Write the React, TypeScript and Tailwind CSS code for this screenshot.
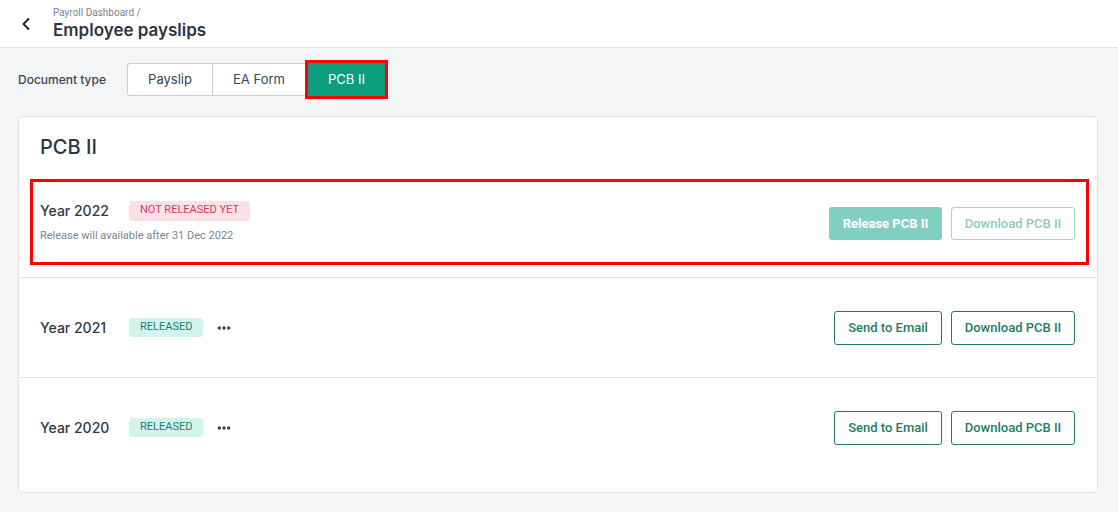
import { ChevronLeft, MoreHorizontal } from "lucide-react";

type Row = {
  year: string;
  released: boolean;
  note?: string;
};

const rows: Row[] = [
  { year: "Year 2022", released: false, note: "Release will available after 31 Dec 2022" },
  { year: "Year 2021", released: true },
  { year: "Year 2020", released: true },
];

const inter = { fontFamily: "Inter, 'Noto Sans', sans-serif" };

function RowContent({ row }: { row: Row }) {
  return (
    <div className="flex w-full items-center justify-between">
      <div className="flex flex-col">
        <div className="flex items-center">
          <span
            className="w-[89px] text-[14px] font-medium text-[#2f3847]"
            style={inter}
          >
            {row.year}
          </span>
          {row.released ? (
            <span className="flex h-[19px] items-center rounded-[3px] bg-[#d3f4ec] px-[11px] text-[11px] text-[#17806a]">
              RELEASED
            </span>
          ) : (
            <span className="flex h-[20px] items-center rounded-[3px] bg-[#fde1e7] px-[11px] text-[11px] text-[#d23c5c]">
              NOT RELEASED YET
            </span>
          )}
          {row.released && (
            <MoreHorizontal className="ml-[13px] h-[16px] w-[16px] text-[#2f3847]" strokeWidth={3} />
          )}
        </div>
        {row.note && (
          <span className="mt-[7px] text-[11px] leading-[16px] text-[#7b838f]">{row.note}</span>
        )}
      </div>
      <div className="flex items-center gap-[9px]">
        {row.released ? (
          <>
            <button className="h-[34px] w-[108px] rounded-[3px] border border-[#1f7c69] bg-white text-[13px] font-medium text-[#1f7c69]">
              Send to Email
            </button>
            <button className="h-[34px] w-[124px] rounded-[3px] border border-[#1f7c69] bg-white text-[13px] font-medium text-[#1f7c69]">
              Download PCB II
            </button>
          </>
        ) : (
          <>
            <button className="mt-[3px] h-[33px] w-[113px] rounded-[3px] bg-[#80cfc0] text-[13px] font-bold text-white">
              Release PCB II
            </button>
            <button className="mt-[3px] h-[33px] w-[124px] rounded-[3px] border border-[#9ed7cc] bg-white text-[13px] font-medium text-[#8fcabe]">
              Download PCB II
            </button>
          </>
        )}
      </div>
    </div>
  );
}

export default function App() {
  return (
    <div
      className="min-h-[512px] bg-[#f4f5f7] text-[#2f3847]"
      style={{ fontFamily: "Roboto, 'Liberation Sans', sans-serif" }}
    >
      <header className="flex h-[48px] items-center border-b border-[#e3e5e8] bg-white pl-[16px]">
        <ChevronLeft className="h-[20px] w-[20px] text-[#1f2530]" strokeWidth={2.4} />
        <div className="ml-[17px] flex flex-col">
          <span className="text-[10px] leading-[12px] text-[#7b838f]">Payroll Dashboard /</span>
          <span
            className="text-[17px] font-semibold leading-[22px] text-[#2c3545]"
            style={inter}
          >
            Employee payslips
          </span>
        </div>
      </header>

      <div className="pl-[18px] pr-[20px] pt-[15px] pb-[19px]">
        <div className="flex items-center">
          <span className="w-[109px] text-[12px] font-medium text-[#3a4352]" style={inter}>
            Document type
          </span>
          <div className="flex h-[33px]">
            <button
              className="w-[86px] rounded-l-[3px] border border-[#c9ccd1] bg-white text-[13px] text-[#3a4352]"
              style={inter}
            >
              Payslip
            </button>
            <button
              className="w-[93px] border-y border-r border-[#c9ccd1] bg-white text-[13px] text-[#3a4352]"
              style={inter}
            >
              EA Form
            </button>
            <button
              className="relative w-[81px] bg-[#0a9e7e] text-[13px] text-white"
              style={inter}
            >
              PCB II
              <span className="absolute -inset-y-[3px] -left-px -right-px border-[3px] border-[#ff0000]" />
            </button>
          </div>
        </div>

        <div className="mt-[20px] rounded-[5px] border border-[#dfe1e5] bg-white pb-[15px]">
          <h2
            className="px-[21px] pt-[16px] text-[20px] font-medium leading-[28px] text-[#2c3545]"
            style={inter}
          >
            PCB II
          </h2>
          <div className="mt-[18px] mb-[12px] ml-[11px] mr-[8px] flex h-[86px] items-center border-[3px] border-[#ff0000] pl-[7px] pr-[11px]">
            <RowContent row={rows[0]} />
          </div>
          {rows.slice(1).map((row) => (
            <div
              key={row.year}
              className="flex h-[100px] items-center border-t border-[#e3e5e8] pl-[21px] pr-[22px]"
            >
              <RowContent row={row} />
            </div>
          ))}
        </div>
      </div>
    </div>
  );
}
